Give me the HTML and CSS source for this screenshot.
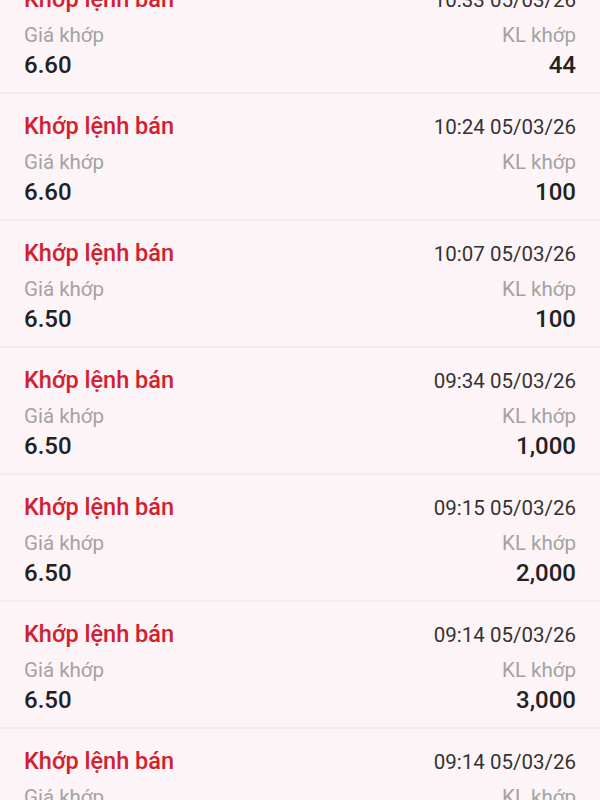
FILE: index.html
```html
<!DOCTYPE html>
<html>
<head>
<meta charset="UTF-8">
<meta name="viewport" content="width=device-width, initial-scale=1.0">
  <title>Lịch sử khớp lệnh</title>
  <link rel="stylesheet" href="styles.css">
</head>
<body>

<div class="list">
  <div class="item">
    <div class="row">
      <span class="title">Khớp lệnh bán</span>
      <span class="time">10:33 05/03/26</span>
    </div>
    <div class="row">
      <span class="label">Giá khớp</span>
      <span class="label">KL khớp</span>
    </div>
    <div class="row">
      <span class="value">6.60</span>
      <span class="value">44</span>
    </div>
  </div>

  <div class="item">
    <div class="row">
      <span class="title">Khớp lệnh bán</span>
      <span class="time">10:24 05/03/26</span>
    </div>
    <div class="row">
      <span class="label">Giá khớp</span>
      <span class="label">KL khớp</span>
    </div>
    <div class="row">
      <span class="value">6.60</span>
      <span class="value">100</span>
    </div>
  </div>

  <div class="item">
    <div class="row">
      <span class="title">Khớp lệnh bán</span>
      <span class="time">10:07 05/03/26</span>
    </div>
    <div class="row">
      <span class="label">Giá khớp</span>
      <span class="label">KL khớp</span>
    </div>
    <div class="row">
      <span class="value">6.50</span>
      <span class="value">100</span>
    </div>
  </div>

  <div class="item">
    <div class="row">
      <span class="title">Khớp lệnh bán</span>
      <span class="time">09:34 05/03/26</span>
    </div>
    <div class="row">
      <span class="label">Giá khớp</span>
      <span class="label">KL khớp</span>
    </div>
    <div class="row">
      <span class="value">6.50</span>
      <span class="value">1,000</span>
    </div>
  </div>

  <div class="item">
    <div class="row">
      <span class="title">Khớp lệnh bán</span>
      <span class="time">09:15 05/03/26</span>
    </div>
    <div class="row">
      <span class="label">Giá khớp</span>
      <span class="label">KL khớp</span>
    </div>
    <div class="row">
      <span class="value">6.50</span>
      <span class="value">2,000</span>
    </div>
  </div>

  <div class="item">
    <div class="row">
      <span class="title">Khớp lệnh bán</span>
      <span class="time">09:14 05/03/26</span>
    </div>
    <div class="row">
      <span class="label">Giá khớp</span>
      <span class="label">KL khớp</span>
    </div>
    <div class="row">
      <span class="value">6.50</span>
      <span class="value">3,000</span>
    </div>
  </div>

  <div class="item">
    <div class="row">
      <span class="title">Khớp lệnh bán</span>
      <span class="time">09:14 05/03/26</span>
    </div>
    <div class="row">
      <span class="label">Giá khớp</span>
      <span class="label">KL khớp</span>
    </div>
    <div class="row">
      <span class="value">6.50</span>
      <span class="value">5,000</span>
    </div>
  </div>
</div>

</body>
</html>
```

FILE: styles.css
```css
body {
  margin: 0;
  font-family: Roboto, "Noto Sans", Arial, sans-serif;
  background-color: #fdf4f8;
}
.list {
  margin-top: -33px;
}
.item {
  padding: 18px 24px 12px;
  border-bottom: 2px solid #f3ecef;
  background-color: #fdf4f8;
}
.row {
  display: flex;
  justify-content: space-between;
  align-items: baseline;
}
.title {
  font-size: 23.5px;
  font-weight: 500;
  line-height: 28px;
  color: #d3202c;
}
.time {
  font-size: 20.5px;
  line-height: 28px;
  color: #333333;
}
.label {
  margin-top: 7px;
  font-size: 20.5px;
  line-height: 28px;
  color: #a3a3a3;
}
.value {
  margin-top: 1px;
  font-size: 24px;
  font-weight: 500;
  line-height: 30px;
  color: #222222;
}
```
